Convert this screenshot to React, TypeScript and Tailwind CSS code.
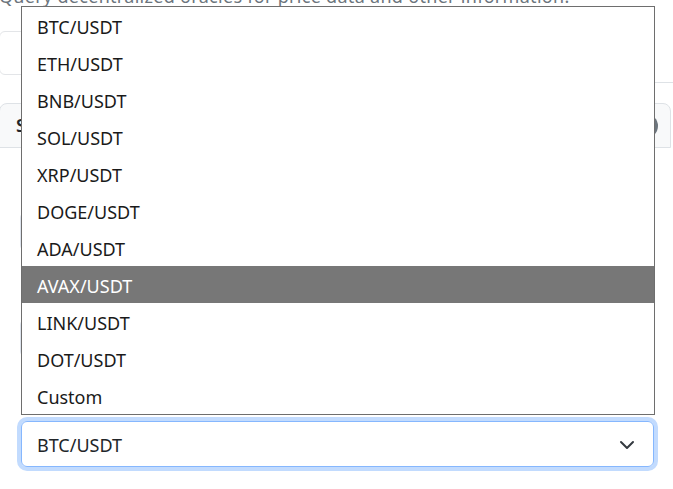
const pairs = [
  'BTC/USDT',
  'ETH/USDT',
  'BNB/USDT',
  'SOL/USDT',
  'XRP/USDT',
  'DOGE/USDT',
  'ADA/USDT',
  'AVAX/USDT',
  'LINK/USDT',
  'DOT/USDT',
  'Custom',
];

export default function App() {
  const highlighted = 'AVAX/USDT';

  return (
    <div
      className="relative h-[489px] w-[673px] overflow-hidden bg-white text-[#212529]"
      style={{ fontFamily: '"Noto Sans", "Open Sans", sans-serif' }}
    >
      {/* page behind the open list */}
      <p className="mt-[-17px] ml-[-1px] whitespace-nowrap text-[18px] leading-[27px] tracking-[0.3px] text-[#6c757d]">
        Query decentralized oracles for price data and other information.
      </p>

      <div className="mt-[21px] flex items-start">
        <div className="ml-[-1px] h-[44px] w-[300px] rounded-md border border-[#e3e5e8]" />
        <div className="mt-[51px] h-px flex-1 bg-[#dee2e6]" />
      </div>

      {/* tabs bar */}
      <div className="mt-[20px] ml-[-1px] flex h-[45px] w-[672px] items-center justify-between rounded-t-lg border border-[#dee2e6] bg-[#f8f9fa] pl-[16px] pr-[12px]">
        <span className="text-[18px] font-semibold">Spot Price</span>
        <span className="h-[24px] w-[30px] rounded-full bg-[#6c757d]" />
      </div>

      {/* form fields */}
      <div className="mt-[64px] flex flex-col gap-[68px] pl-[20px] pr-[20px]">
        <div className="h-[39px] rounded-md border border-[#dde3ec]" />
        <div className="h-[38px] rounded-md border border-[#dde3ec]" />
      </div>

      {/* select */}
      <div className="absolute left-[21px] top-[421px] flex h-[46px] w-[633px] items-center justify-between rounded-md border border-[#86b7fe] pl-[15px] pr-[18px] pt-[2px] text-[18px] shadow-[0_0_0_4px_#c2dbfe]">
        <span>BTC/USDT</span>
        <svg width="16" height="12" viewBox="0 2 16 12" fill="none" stroke="#343a40" strokeWidth="2" strokeLinecap="round" strokeLinejoin="round">
          <path d="m2 5 6 6 6-6" />
        </svg>
      </div>

      {/* open list */}
      <div className="absolute left-[21px] top-[6px] w-[634px] border border-[#6e6e6e] bg-white">
        {pairs.map((p) => (
          <div
            key={p}
            className={`flex h-[37px] items-center pl-[15px] pt-[3px] text-[18px] ${
              p === highlighted ? 'bg-[#777777] text-white' : 'text-[#1a1a1a]'
            }`}
          >
            {p}
          </div>
        ))}
      </div>
    </div>
  );
}
